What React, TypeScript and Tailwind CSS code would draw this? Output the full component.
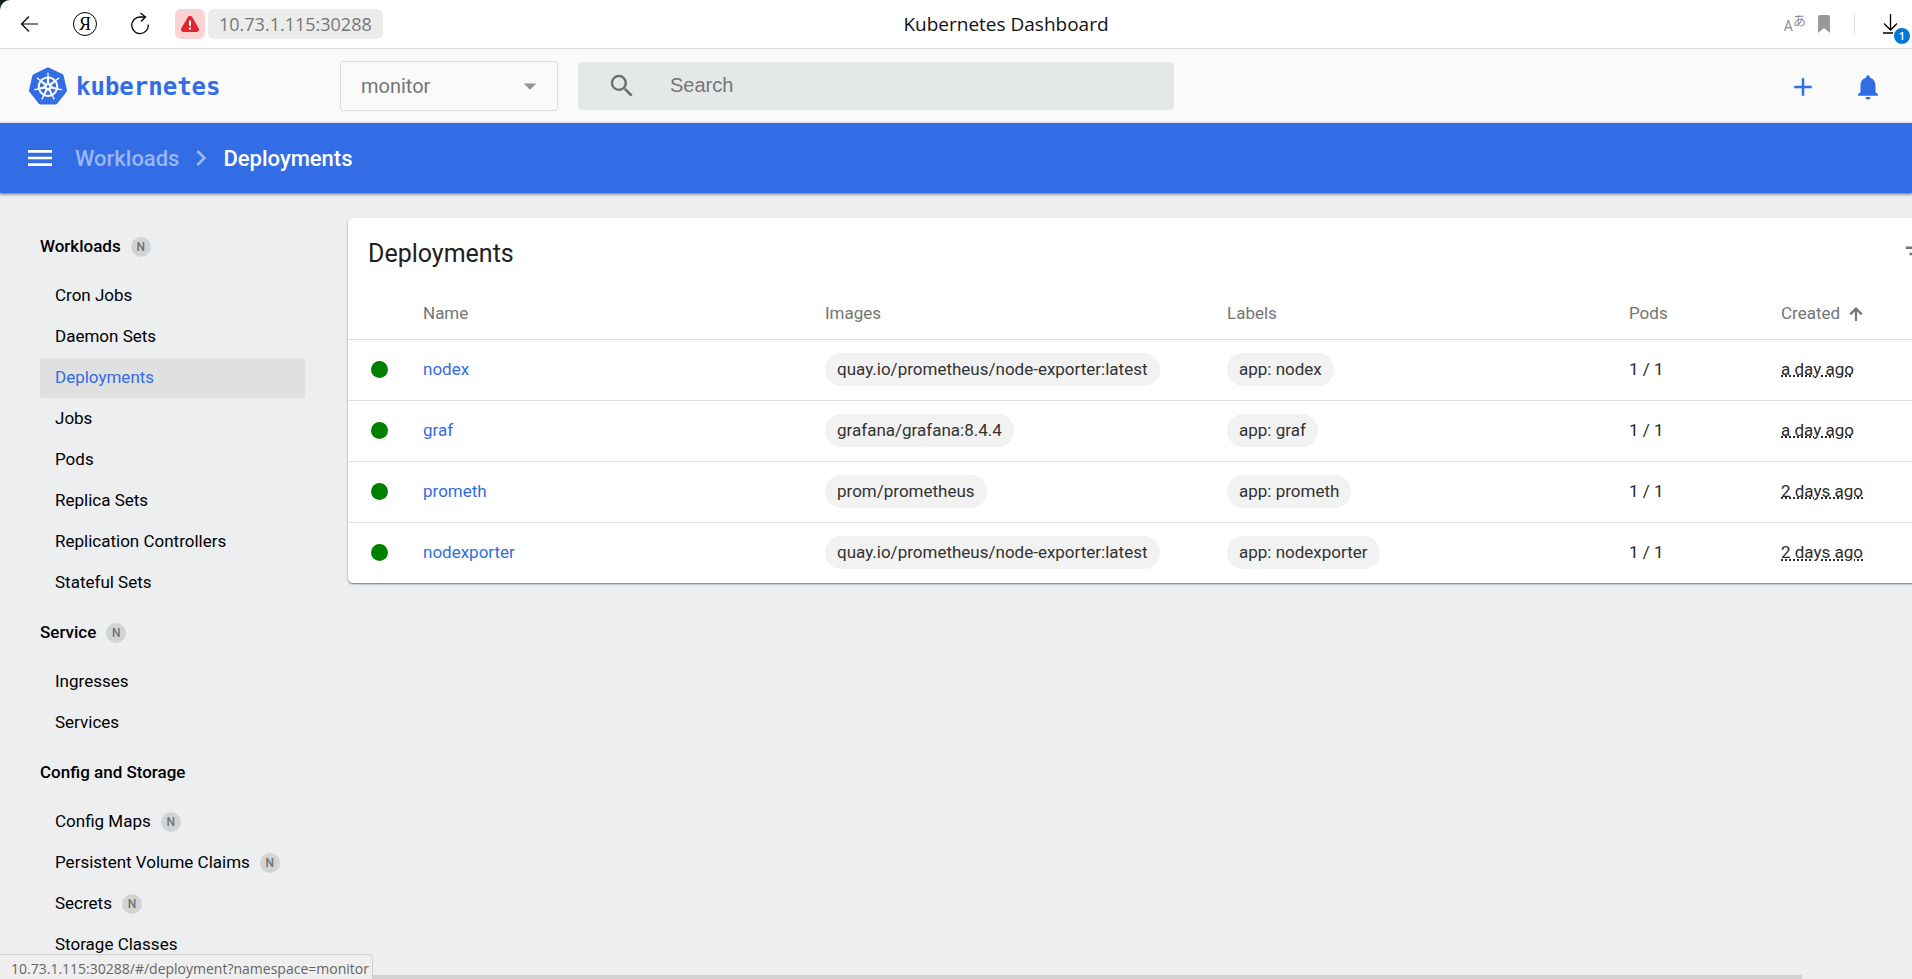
import React from 'react';
import {
  MdAdd,
  MdArrowDropDown,
  MdChevronRight,
  MdFilterList,
  MdMenu,
  MdNotifications,
  MdSearch,
} from 'react-icons/md';
import { SiKubernetes } from 'react-icons/si';

type NavItem = { label: string; namespaced?: boolean; active?: boolean };
type NavSection = { title: string; namespaced?: boolean; items: NavItem[] };

const sections: NavSection[] = [
  {
    title: 'Workloads',
    namespaced: true,
    items: [
      { label: 'Cron Jobs' },
      { label: 'Daemon Sets' },
      { label: 'Deployments', active: true },
      { label: 'Jobs' },
      { label: 'Pods' },
      { label: 'Replica Sets' },
      { label: 'Replication Controllers' },
      { label: 'Stateful Sets' },
    ],
  },
  {
    title: 'Service',
    namespaced: true,
    items: [{ label: 'Ingresses' }, { label: 'Services' }],
  },
  {
    title: 'Config and Storage',
    items: [
      { label: 'Config Maps', namespaced: true },
      { label: 'Persistent Volume Claims', namespaced: true },
      { label: 'Secrets', namespaced: true },
      { label: 'Storage Classes' },
    ],
  },
];

const deployments = [
  { name: 'nodex', image: 'quay.io/prometheus/node-exporter:latest', label: 'app: nodex', pods: '1 / 1', created: 'a day ago' },
  { name: 'graf', image: 'grafana/grafana:8.4.4', label: 'app: graf', pods: '1 / 1', created: 'a day ago' },
  { name: 'prometh', image: 'prom/prometheus', label: 'app: prometh', pods: '1 / 1', created: '2 days ago' },
  { name: 'nodexporter', image: 'quay.io/prometheus/node-exporter:latest', label: 'app: nodexporter', pods: '1 / 1', created: '2 days ago' },
];

function BrowserBar() {
  return (
    <div className="shrink-0 bg-[#10201a]">
      <div className="relative flex h-[49px] items-center rounded-tl-[10px] border-b border-[#dfdfdf] bg-white pb-px pl-[20px] font-['Open_Sans',sans-serif]">
        <button aria-label="Back" className="text-black">
          <svg width="20" height="20" viewBox="0 0 20 20" fill="none" stroke="currentColor" strokeWidth="1.2">
            <path d="M18 10H1.5M9 2.5 1.5 10 9 17.5" />
          </svg>
        </button>
        <button
          aria-label="Home page"
          className="ml-[33px] flex size-6 items-center justify-center rounded-full border border-black font-['Liberation_Serif',serif] text-[18px] leading-none text-black"
        >
          Я
        </button>
        <button aria-label="Reload" className="ml-[32px] text-black">
          <svg width="22" height="24" viewBox="0 0 22 24" fill="none" stroke="currentColor" strokeWidth="1.3">
            <path d="M19.3 12.5A8.3 8.3 0 1 1 11 5h5.5" />
            <path d="M11.5 1l5 4-4.5 4.5" />
          </svg>
        </button>
        <button aria-label="Connection is not secure" className="ml-[24px] flex size-[30px] items-center justify-center rounded-md bg-[#fbd3d4]">
          <svg width="20" height="18" viewBox="0 0 20 18">
            <path d="M7.6 2.5 1.3 13.3C.4 15 1.4 17 3.3 17h13.4c1.9 0 2.9-2 2-3.7L12.4 2.5c-1-1.9-3.8-1.9-4.8 0Z" fill="#e0262f" />
            <path d="M9 5.5h2v5.5H9zM9 12.5h2v2H9z" fill="#fff" />
          </svg>
        </button>
        <button className="ml-[3px] h-[30px] rounded-md bg-[#ececec] px-[11px] text-[18px] leading-[30px] text-[#777]">10.73.1.115:30288</button>
        <div className="pointer-events-none absolute inset-x-0 text-center text-[19px] leading-[30px] text-[#111]">
          <span className="pl-[100px]">Kubernetes Dashboard</span>
        </div>
        <div className="ml-auto flex items-center pr-[3px]">
          <button aria-label="Translate" className="flex font-['Roboto','Noto_Sans_CJK_JP',sans-serif] leading-none text-[#8d8d8d]">
            <span className="pt-[5px] text-[14px]">A</span>
            <span className="text-[13px]">あ</span>
          </button>
          <button aria-label="Bookmark" className="ml-[12px] text-[#999]">
            <svg width="12" height="18" viewBox="0 0 12 18">
              <path d="M2 0h8a2 2 0 0 1 2 2v16l-6-5-6 5V2a2 2 0 0 1 2-2Z" fill="currentColor" />
            </svg>
          </button>
          <div className="mx-[24px] h-5 w-px bg-[#dcdcdc]" />
          <button aria-label="Downloads" className="relative mr-[2px] w-[28px] pl-[4px] text-black">
            <svg width="14" height="20" viewBox="0 0 14 20" fill="none" stroke="currentColor" strokeWidth="1.3">
              <path d="M7.5 0v16M1 9.5 7.5 16 14 9.5M0 19h10" />
            </svg>
            <span className="absolute top-[14px] left-[15px] flex size-4 items-center justify-center rounded-full bg-[#0078d7] text-[11px] leading-none font-semibold text-white">
              1
            </span>
          </button>
        </div>
      </div>
    </div>
  );
}

function TopBar() {
  return (
    <header className="flex h-[74px] shrink-0 items-center bg-[#fafafa] pr-[29px]">
      <a href="#/" className="flex w-[340px] items-center pl-[29px] text-[#326de6]">
        <SiKubernetes size={38} />
        <span className="pt-px pl-[9px] font-['DejaVu_Sans_Mono',monospace] text-[24px] leading-none font-bold">kubernetes</span>
      </a>
      <div className="relative w-[218px]">
        <select
          aria-label="Namespace"
          className="h-[50px] w-full appearance-none rounded-[3px] border border-[#dcdcdc] bg-transparent px-5 text-[20px] text-[#757575]"
        >
          <option>monitor</option>
        </select>
        <MdArrowDropDown size={30} className="pointer-events-none absolute top-[10px] right-[13px] text-[#949494]" />
      </div>
      <div className="ml-5 flex h-12 w-[596px] items-center rounded-[3px] bg-[#e4e8e9] pl-[29px]">
        <MdSearch size={30} className="shrink-0 text-[#6d6f70]" />
        <input
          type="search"
          aria-label="Search"
          placeholder="Search"
          className="ml-[33px] h-full min-w-0 flex-1 bg-transparent pb-[2px] font-['Liberation_Sans',sans-serif] text-[20px] outline-none placeholder:text-[#757575]"
        />
      </div>
      <div className="ml-auto flex items-center gap-[35px] pt-px text-[#326de6]">
        <button aria-label="Create new resource">
          <MdAdd size={30} />
        </button>
        <button aria-label="Notifications">
          <MdNotifications size={30} />
        </button>
      </div>
    </header>
  );
}

function ActionBar() {
  return (
    <div className="z-10 flex h-[70px] shrink-0 items-center bg-[#326de6] pl-6 text-[22px] font-medium shadow-[0_1px_3px_rgba(0,0,0,0.6)]">
      <button aria-label="Toggle menu" className="text-white">
        <MdMenu size={32} />
      </button>
      <nav className="ml-[19px] flex items-center">
        <a href="#/workloads" className="text-[#9ab7f3]">Workloads</a>
        <MdChevronRight size={32} className="mx-[6px] text-[#9ab7f3]" />
        <span className="text-white">Deployments</span>
      </nav>
    </div>
  );
}

function NamespacedBadge() {
  return (
    <span className="ml-[10px] inline-flex size-5 items-center justify-center rounded-full bg-[#d1d3d4] text-[12px] leading-none font-medium text-[#6f7173]">
      N
    </span>
  );
}

function Sidebar() {
  return (
    <nav className="w-[348px] shrink-0 overflow-hidden pt-[25px] pr-[43px] pl-10 text-black">
      {sections.map((section) => (
        <section key={section.title}>
          <h2 className="flex h-[58px] items-center font-medium">
            <a href="#/">{section.title}</a>
            {section.namespaced && <NamespacedBadge />}
          </h2>
          <ul>
            {section.items.map((item) => (
              <li key={item.label} className="mb-px">
                <a
                  href="#/"
                  className={
                    item.active
                      ? 'flex h-10 items-center rounded-[3px] bg-[#e0e0e0] pl-[15px] text-[#326de6]'
                      : 'flex h-10 items-center rounded-[3px] pl-[15px]'
                  }
                >
                  {item.label}
                  {item.namespaced && <NamespacedBadge />}
                </a>
              </li>
            ))}
          </ul>
        </section>
      ))}
    </nav>
  );
}

function SortArrow() {
  return (
    <svg width="14" height="14" viewBox="0 0 14 14" fill="none" stroke="currentColor" strokeWidth="2.2">
      <path d="M7 14V2M1.2 7.4 7 1.6l5.800 5.800" />
    </svg>
  );
}

function Chip({ children }: { children: React.ReactNode }) {
  return <span className="inline-block h-[33px] rounded-2xl bg-[#f2f2f2] px-3 leading-[33px] text-[#333]">{children}</span>;
}

function DeploymentsCard() {
  return (
    <section className="min-w-[1656px] rounded-[5px] bg-white shadow-[0_1px_2px_rgba(0,0,0,0.5)]">
      <div className="flex h-[71px] items-center justify-between pr-[72px] pl-5">
        <h1 className="text-[25px] text-[#212121]">Deployments</h1>
        <button aria-label="Filter" className="text-[#757575]">
          <MdFilterList size={30} />
        </button>
      </div>
      <table className="w-full table-fixed text-left">
        <colgroup>
          <col className="w-[75px]" />
          <col />
          <col />
          <col />
          <col className="w-[152px]" />
          <col className="w-[152px]" />
          <col className="w-[71px]" />
        </colgroup>
        <thead>
          <tr className="h-[50px] border-b border-[#dedede] text-[#757575]">
            <th />
            <th className="font-normal">Name</th>
            <th className="font-normal">Images</th>
            <th className="font-normal">Labels</th>
            <th className="font-normal">Pods</th>
            <th className="font-normal">
              <button className="flex items-center gap-[9px]">
                Created <SortArrow />
              </button>
            </th>
            <th />
          </tr>
        </thead>
        <tbody>
          {deployments.map((d) => (
            <tr key={d.name} className="h-[61px] border-b border-[#dedede] text-[#2b2b2b] last:border-b-0">
              <td className="pl-[23px]">
                <div className="size-[17px] rounded-full bg-[#008000]" />
              </td>
              <td>
                <a href="#/" className="text-[#326de6]">{d.name}</a>
              </td>
              <td>
                <Chip>{d.image}</Chip>
              </td>
              <td>
                <Chip>{d.label}</Chip>
              </td>
              <td>{d.pods}</td>
              <td>
                <span className="underline decoration-dotted decoration-2">{d.created}</span>
              </td>
              <td />
            </tr>
          ))}
        </tbody>
      </table>
    </section>
  );
}

export default function App() {
  return (
    <div className="relative flex h-screen flex-col overflow-hidden bg-[#edeef0] font-['Roboto',sans-serif] text-[17px]">
      <BrowserBar />
      <TopBar />
      <ActionBar />
      <div className="flex min-h-0 flex-1">
        <Sidebar />
        <main className="-ml-1 min-w-0 flex-1 overflow-hidden pt-[25px] pl-1">
          <DeploymentsCard />
        </main>
      </div>
      <div className="absolute bottom-0 left-0 h-1 w-[1802px] max-w-[95%] bg-[#d0d2d3]" />
      <div className="absolute bottom-0 left-0 h-[25px] rounded-tr-[5px] border-t border-r border-[#d0d0d0] bg-[#efefef] pr-[3px] pl-[11px] font-['Open_Sans',sans-serif] text-[14px] leading-[27px] text-[#666]">
        10.73.1.115:30288/#/deployment?namespace=monitor
      </div>
    </div>
  );
}
